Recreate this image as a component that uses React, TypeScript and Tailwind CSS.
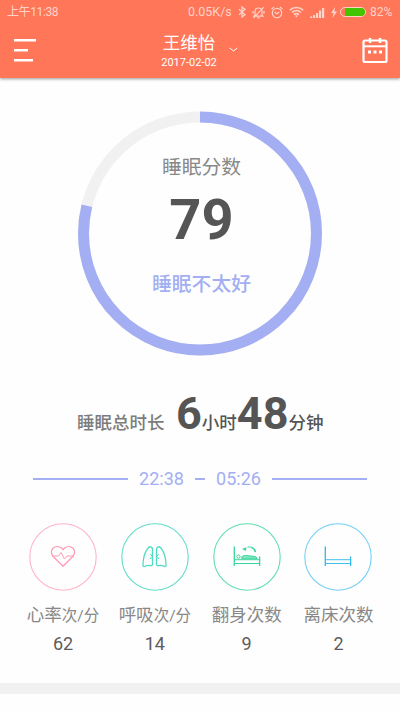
import type { ReactNode } from "react";

function StatusBar() {
  return (
    <div className="flex h-[23px] items-center pl-[7px] pr-[7px] pt-[1px] text-[12.5px] leading-[22px] text-[#ffd3c9]">
      <span className="text-[12px] tracking-[-0.4px]">上午11:38</span>
      <span className="ml-auto w-[44px] whitespace-nowrap">0.05K/s</span>
      <svg className="ml-[6px]" width="8" height="12" viewBox="0 0 8 12" fill="none" stroke="currentColor" strokeWidth="1.3">
        <path d="M1 3.2l6 5.4L4 11V1l3 2.4L1 8.8" />
      </svg>
      <svg className="ml-[6px]" width="13" height="13" viewBox="0 0 13 13" fill="none" stroke="currentColor" strokeWidth="1.2">
        <path d="M3 9.2V5.6C3 3.3 4.5 2 6.5 2S10 3.3 10 5.6v3.6l1 1H2zM5.3 11.8h2.4M1.5 12L11.8 1.2M1 5v2.5M12 5v2.5" />
      </svg>
      <svg className="ml-[6px]" width="12" height="13" viewBox="0 0 12 13" fill="none" stroke="currentColor" strokeWidth="1.2">
        <circle cx="6" cy="7" r="4.7" />
        <path d="M.6 3L3 1M11.4 3L9 1M3.7 6l2.3 1.7L8.2 6" />
      </svg>
      <svg className="ml-[6px]" width="15" height="12" viewBox="0 0 15 12" fill="none" stroke="currentColor" strokeWidth="1.6">
        <path d="M.8 4.2c4-3.6 9.4-3.6 13.4 0M3 6.5c2.7-2.4 6.3-2.4 9 0M5 8.7c1.5-1.3 3.5-1.3 5 0" />
        <path d="M7.5 11.5L5.8 9.6h3.4z" fill="currentColor" stroke="none" />
      </svg>
      <svg className="ml-[6px]" width="15" height="11" viewBox="0 0 15 11" fill="currentColor">
        <path d="M0 9.5h2.2V11H0zM3 8h2.2v3H3zM6 6h2.2v5H6zM9 3.5h2.2V11H9zM12 1h2.2v10H12z" />
      </svg>
      <svg className="ml-[6px]" width="6" height="11" viewBox="0 0 6 11" fill="currentColor">
        <path d="M4 0L0 6h2.500L1.500 11 6 4.500H3.400z" />
      </svg>
      <div className="ml-[3px] flex h-[10px] w-[26px] justify-end rounded-full border border-[#ffd3c9] pl-[4px]">
        <div className="h-full w-full rounded-r-full bg-[#43c400]" />
      </div>
      <span className="ml-[4px] w-[23px] whitespace-nowrap text-[12px]">82%</span>
    </div>
  );
}

function Header() {
  return (
    <header className="h-[78px] bg-[#ff7659] shadow-[0_1px_3px_rgba(0,0,0,0.4)]">
      <StatusBar />
      <div className="flex h-[55px] items-start pl-[14px] pr-[12px] text-white">
        <svg className="mt-[15px]" width="24" height="25" viewBox="0 0 24 25" fill="currentColor">
          <path d="M0 1h22v2.6H0zM0 11h14v2.6H0zM0 21h19v2.6H0z" />
        </svg>
        <div className="ml-[122px] flex items-start">
          <div className="flex w-[58px] flex-col items-center whitespace-nowrap pt-[9px]">
            <span className="text-[17.5px] leading-[22px]">王维怡</span>
            <span className="mt-[1px] text-[11px] leading-[16px]">2017-02-02</span>
          </div>
          <svg className="ml-[11px] mt-[24px]" width="9" height="6" viewBox="0 0 9 6" fill="none" stroke="currentColor" strokeWidth="1">
            <path d="M.7 1l3.8 3L8.3 1" />
          </svg>
        </div>
        <svg className="ml-auto mt-[14px]" width="26" height="27" viewBox="0 0 26 27" fill="none" stroke="currentColor">
          <rect x="1.5" y="3.5" width="23" height="21.5" rx="1.5" strokeWidth="2.2" />
          <path d="M1.5 9.3h23" strokeWidth="2" />
          <path d="M8 1v5M18 1v5" strokeWidth="2.6" />
          <path d="M6 15h3M11.5 15h3M17 15h3" strokeWidth="3" />
        </svg>
      </div>
    </header>
  );
}

function ScoreRing() {
  const radius = 116.5;
  const length = 2 * Math.PI * radius;
  return (
    <div className="mx-auto mt-[33px] grid h-[245px] w-[246px]">
      <svg className="col-start-1 row-start-1" width="246" height="245" viewBox="0 0 246 245" fill="none" strokeWidth="11">
        <circle cx="123" cy="122.5" r={radius} stroke="#f1f1f1" />
        <circle
          cx="123"
          cy="122.5"
          r={radius}
          stroke="#a3aff2"
          strokeDasharray={`${length * 0.788} ${length}`}
          transform="rotate(-90 123 122.5)"
        />
      </svg>
      <div className="col-start-1 row-start-1 flex flex-col items-center pl-[3px] pt-[42px]">
        <span className="text-[19.8px] leading-[30px] text-[#888]">睡眠分数</span>
        <span className="mt-[7px] text-[56px] font-bold leading-[60px] text-[#555]">79</span>
        <span className="mt-[20px] text-[19.8px] font-medium leading-[30px] text-[#a3aff2]">睡眠不太好</span>
      </div>
    </div>
  );
}

function Duration() {
  return (
    <div className="mt-[32px] flex h-[52px] items-baseline whitespace-nowrap pl-[77px] text-[17.5px] font-medium leading-[52px] text-[#555]">
      <span className="w-[99px] text-[#7c7c7c]">睡眠总时长</span>
      <span className="text-[45px] font-bold">6</span>
      <span>小时</span>
      <span className="text-[45px] font-bold">48</span>
      <span>分钟</span>
    </div>
  );
}

function TimeRange() {
  return (
    <div className="mt-[27px] flex h-[24px] items-center justify-center text-[18px] leading-[24px] text-[#a3aff2]">
      <div className="h-[1.5px] w-[95px] bg-[#a3aff2]" />
      <span className="w-[67px] text-center">22:38</span>
      <div className="h-[1.5px] w-[10px] bg-[#a3aff2]" />
      <span className="w-[67px] text-center">05:26</span>
      <div className="h-[1.5px] w-[95px] bg-[#a3aff2]" />
    </div>
  );
}

function Heart() {
  return (
    <g stroke="#ff9bb4">
      <path d="M34 43.3L24.2 33.5c-3-3.3-2-7.3.8-9 3-1.7 6.8-.8 9 2 2.2-2.8 6-3.7 9-2 2.8 1.7 3.8 5.7.8 9z" />
      <path d="M23 33h6.5l2.5-3.5 3.5 6.5 2.5-3H45" strokeWidth="1" />
    </g>
  );
}

function Lungs() {
  return (
    <g stroke="#4fdcc3">
      <path d="M31.5 41.5V27c0-3.8-2.8-4.3-5-1.3C23.5 30 22 36 22 42.5c0 1.5 1.5 1.5 3 .3 2-1.2 6.5 1 6.5-1.3zM35.5 41.5V27c0-3.8 2.8-4.3 5-1.3C43.5 30 45 36 45 42.5c0 1.5-1.5 1.5-3 .3-2-1.2-6.5 1-6.5-1.3z" />
      <path d="M31 33.5l-2 2.5M31 33l-1.5-2M36 33.5l2 2.5M36 33l1.5-2" strokeWidth="1" />
    </g>
  );
}

function TurningBed() {
  return (
    <g stroke="#38d59b">
      <path d="M21.3 23.5V43M46.6 33.5V43" />
      <path d="M22 36.7h25M22 40.5h25" strokeWidth="1" />
      <circle cx="25.5" cy="33.6" r="1.6" strokeWidth="1" />
      <path d="M28.5 35.3l.8-2c2-1 4-.8 6.5-.5l6.5.8 2 1.7z" strokeWidth="1" fill="#8ee9c6" />
      <path d="M34.500 24.200c1.200-.4 2.400-.3 3.500 0" strokeWidth="1" />
      <path d="M38.300 24.200c2.300.7 3.700 2.500 4.200 5" strokeWidth="1.600" />
      <path d="M29 26l4.300-1.800-.3 3.800z" fill="#38d59b" stroke="none" />
    </g>
  );
}

function Bed() {
  return (
    <g stroke="#2fb8ea">
      <path d="M21.3 23.5V43M46.6 33.5V43" />
      <path d="M22 36.7h25M22 40.5h25" strokeWidth=".9" />
    </g>
  );
}

interface MetricProps {
  ring: string;
  icon: ReactNode;
  label: string;
  unit?: string;
  value: number;
}

function Metric({ ring, icon, label, unit, value }: MetricProps) {
  return (
    <div className="flex w-[74px] flex-col items-center whitespace-nowrap">
      <svg width="68" height="68" viewBox="0 0 68 68" fill="none" strokeWidth="1.3" strokeLinejoin="round">
        <circle cx="34" cy="34" r="33.2" stroke={ring} strokeWidth="1.1" />
        {icon}
      </svg>
      <div className="mt-[11px] h-[26px] text-[17.5px] leading-[26px] text-[#888]">
        {label}
        {unit && <span className="text-[15.5px]">{unit}</span>}
      </div>
      <span className="mt-[4px] text-[18px] leading-[24px] text-[#5c5c5c]">{value}</span>
    </div>
  );
}

export default function App() {
  return (
    <div className="flex h-[711px] w-[400px] flex-col overflow-hidden bg-[#fefefe] font-[Roboto,'Noto_Sans_CJK_SC',sans-serif]">
      <Header />
      <ScoreRing />
      <Duration />
      <TimeRange />
      <div className="mt-[32px] flex justify-between pl-[26px] pr-[24.5px]">
        <Metric ring="#ffb4c7" icon={<Heart />} label="心率" unit="次/分" value={62} />
        <Metric ring="#62dec9" icon={<Lungs />} label="呼吸" unit="次/分" value={14} />
        <Metric ring="#5fdeac" icon={<TurningBed />} label="翻身次数" value={9} />
        <Metric ring="#72cff7" icon={<Bed />} label="离床次数" value={2} />
      </div>
      <div className="mt-[27px] h-[11px] bg-[#f1f1f1]" />
    </div>
  );
}
